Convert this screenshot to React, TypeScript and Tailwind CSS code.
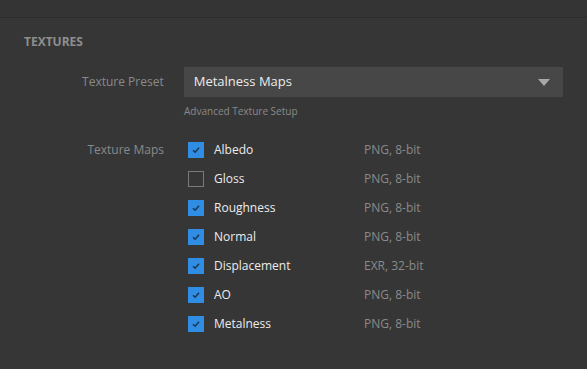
import React, { useState } from 'react';

type MapRow = { name: string; format: string; checked: boolean };

const initialMaps: MapRow[] = [
    { name: 'Albedo', format: 'PNG, 8-bit', checked: true },
    { name: 'Gloss', format: 'PNG, 8-bit', checked: false },
    { name: 'Roughness', format: 'PNG, 8-bit', checked: true },
    { name: 'Normal', format: 'PNG, 8-bit', checked: true },
    { name: 'Displacement', format: 'EXR, 32-bit', checked: true },
    { name: 'AO', format: 'PNG, 8-bit', checked: true },
    { name: 'Metalness', format: 'PNG, 8-bit', checked: true },
];

const Checkbox: React.FC<{ checked: boolean; onChange: () => void }> = ({ checked, onChange }) => (
    <button
        onClick={onChange}
        className={`flex items-center justify-center w-4 h-4 shrink-0 ${checked ? 'bg-[#2f8de4]' : 'border border-[#7a7a7a] bg-transparent'}`}
    >
        {checked && (
            <svg width="10" height="10" viewBox="0 0 10 10" fill="none">
                <path d="M2 5.2 L4.1 7.2 L8 2.8" stroke="#1d3550" strokeWidth="1.5" />
            </svg>
        )}
    </button>
);

const App: React.FC = () => {
    const [maps, setMaps] = useState(initialMaps);

    const toggle = (i: number) => {
        setMaps(maps.map((m, idx) => (idx === i ? { ...m, checked: !m.checked } : m)));
    };

    return (
        <div className="w-[587px] h-[369px] bg-[#363636] font-['Open_Sans',sans-serif] overflow-hidden">
            <div className="h-[18px] bg-[#343434] border-b border-[#2b2b2b]" />

            <div className="px-6">
                <h3 className="mt-[16px] text-[12px] font-bold text-[#8e8e8e] leading-[16px]">TEXTURES</h3>

                <div className="mt-[17px] flex items-center gap-5">
                    <label className="w-[140px] text-right text-[12px] text-[#8a8a8a]">Texture Preset</label>
                    <div className="w-[380px] h-[30px] bg-[#474747] flex items-center justify-between pl-[10px] pr-[13px]">
                        <span className="text-[13px] text-[#ececec]">Metalness Maps</span>
                        <svg width="12" height="7" viewBox="0 0 12 7">
                            <path d="M0 0 H12 L6 7 Z" fill="#a8a8a8" />
                        </svg>
                    </div>
                </div>
                <div className="ml-[160px] mt-[7px] text-[10px] text-[#8a8a8a] leading-[14px]">Advanced Texture Setup</div>

                <div className="mt-[17px] flex gap-5">
                    <label className="w-[140px] text-right text-[12px] text-[#8a8a8a] leading-[29px]">Texture Maps</label>
                    <div className="flex flex-col pl-1">
                        {maps.map((m, i) => (
                            <div key={m.name} className="flex items-center h-[29px]">
                                <Checkbox checked={m.checked} onChange={() => toggle(i)} />
                                <span className="ml-[10px] w-[150px] text-[12px] text-[#ececec]">{m.name}</span>
                                <span className="text-[12px] text-[#8a8a8a]">{m.format}</span>
                            </div>
                        ))}
                    </div>
                </div>
            </div>
        </div>
    );
};

export default App;
